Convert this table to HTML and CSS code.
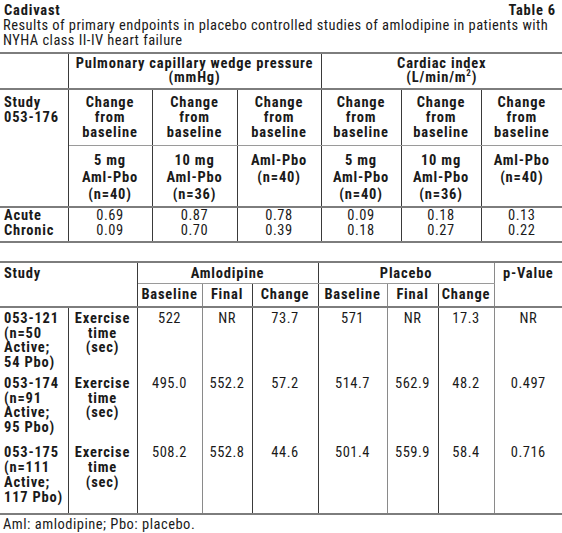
FILE: index.html
```html
<!DOCTYPE html>
<html lang="en">
<head>
  <meta charset="UTF-8">
  <title>Cadivast Table 6</title>
  <link rel="stylesheet" href="styles.css">
</head>
<body>
  <div class="caption">
    <div class="caption-top">
      <span class="brand">Cadivast</span>
      <span class="table-no">Table 6</span>
    </div>
    <div class="subtitle">Results of primary endpoints in placebo controlled studies of amlodipine in patients with NYHA class II-IV heart failure</div>
  </div>

  <table class="grid grid-one">
    <colgroup>
      <col style="width:68px"><col style="width:84px"><col style="width:85px"><col style="width:84px">
      <col style="width:80px"><col style="width:80px"><col style="width:81px">
    </colgroup>
    <tr class="head-row">
      <th class="dark-r"></th>
      <th colspan="3" class="dark-r">Pulmonary capillary wedge pressure<br>(mmHg)</th>
      <th colspan="3">Cardiac index<br>(L/min/m<sup>2</sup>)</th>
    </tr>
    <tr class="change-row">
      <th rowspan="2" class="left dark-r">Study<br>053-176</th>
      <th class="dark-r">Change<br>from<br>baseline</th>
      <th class="dark-r">Change<br>from<br>baseline</th>
      <th class="dark-r">Change<br>from<br>baseline</th>
      <th class="dark-r">Change<br>from<br>baseline</th>
      <th class="dark-r">Change<br>from<br>baseline</th>
      <th>Change<br>from<br>baseline</th>
    </tr>
    <tr class="dose-row">
      <th class="dark-r">5 mg<br>Aml-Pbo<br>(n=40)</th>
      <th class="dark-r">10 mg<br>Aml-Pbo<br>(n=36)</th>
      <th class="dark-r">Aml-Pbo<br>(n=40)</th>
      <th class="dark-r">5 mg<br>Aml-Pbo<br>(n=40)</th>
      <th class="dark-r">10 mg<br>Aml-Pbo<br>(n=36)</th>
      <th>Aml-Pbo<br>(n=40)</th>
    </tr>
    <tr class="value-row first">
      <th class="left dark-r">Acute</th>
      <td class="dark-r">0.69</td><td class="dark-r">0.87</td><td class="dark-r">0.78</td>
      <td class="dark-r">0.09</td><td class="dark-r">0.18</td><td>0.13</td>
    </tr>
    <tr class="value-row last">
      <th class="left dark-r">Chronic</th>
      <td class="dark-r">0.09</td><td class="dark-r">0.70</td><td class="dark-r">0.39</td>
      <td class="dark-r">0.18</td><td class="dark-r">0.27</td><td>0.22</td>
    </tr>
  </table>

  <table class="grid grid-two">
    <colgroup>
      <col style="width:68px"><col style="width:69px"><col style="width:65px"><col style="width:50px">
      <col style="width:66px"><col style="width:69px"><col style="width:51px"><col style="width:56px">
      <col style="width:68px">
    </colgroup>
    <tr class="group-row">
      <th colspan="2" rowspan="2" class="left dark-r">Study</th>
      <th colspan="3" class="dark-r">Amlodipine</th>
      <th colspan="3" class="gray-r">Placebo</th>
      <th rowspan="2">p-Value</th>
    </tr>
    <tr class="sub-row">
      <th class="gray-r">Baseline</th>
      <th class="dark-r">Final</th>
      <th class="dark-r">Change</th>
      <th class="gray-r">Baseline</th>
      <th class="dark-r">Final</th>
      <th class="gray-r">Change</th>
    </tr>
    <tr class="study-row">
      <th class="left dark-r">053-121<br>(n=50<br>Active;<br>54 Pbo)</th>
      <th class="dark-r">Exercise<br>time<br>(sec)</th>
      <td class="gray-r">522</td><td class="dark-r">NR</td><td class="dark-r">73.7</td>
      <td class="gray-r">571</td><td class="dark-r">NR</td><td class="gray-r">17.3</td>
      <td>NR</td>
    </tr>
    <tr class="study-row mid">
      <th class="left dark-r">053-174<br>(n=91<br>Active;<br>95 Pbo)</th>
      <th class="dark-r">Exercise<br>time<br>(sec)</th>
      <td class="gray-r">495.0</td><td class="dark-r">552.2</td><td class="dark-r">57.2</td>
      <td class="gray-r">514.7</td><td class="dark-r">562.9</td><td class="gray-r">48.2</td>
      <td>0.497</td>
    </tr>
    <tr class="study-row end">
      <th class="left dark-r">053-175<br>(n=111<br>Active;<br>117 Pbo)</th>
      <th class="dark-r">Exercise<br>time<br>(sec)</th>
      <td class="gray-r">508.2</td><td class="dark-r">552.8</td><td class="dark-r">44.6</td>
      <td class="gray-r">501.4</td><td class="dark-r">559.9</td><td class="gray-r">58.4</td>
      <td>0.716</td>
    </tr>
  </table>

  <div class="footnote">Aml: amlodipine; Pbo: placebo.</div>
</body>
</html>
```

FILE: styles.css
```css
body {
  margin: 0;
  background: #fff;
  color: #1a1a1a;
  font-family: "Roboto Condensed", "Liberation Sans", sans-serif;
  font-size: 14.5px;
}

.caption {
  padding: 3px 4px 0 3px;
  line-height: 15px;
}

.caption-top {
  display: flex;
  justify-content: space-between;
  padding: 0 2px 0 1px;
}

.brand,
.table-no {
  font-weight: bold;
  letter-spacing: 0.8px;
}

.subtitle {
  letter-spacing: 0.45px;
}

.grid {
  width: 562px;
  table-layout: fixed;
  border-collapse: collapse;
  margin-top: 4px;
}

.grid-two {
  margin-top: 18px;
}

.grid th,
.grid td {
  padding: 0 2px;
  text-align: center;
  vertical-align: top;
}

.grid th {
  font-weight: bold;
  letter-spacing: 0.8px;
}

.grid td {
  font-weight: normal;
  letter-spacing: 0.5px;
}

.grid .left {
  text-align: left;
  padding-left: 4px;
}

.dark-r {
  border-right: 1px solid #3a3a3a;
}

.gray-r {
  border-right: 1px solid #8a8a8a;
}

sup {
  font-size: 9px;
  line-height: 0;
}

/* first table */
.head-row th {
  border-top: 2px solid #7d7d7d;
  border-bottom: 2px solid #7d7d7d;
  line-height: 14px;
  padding-top: 3px;
  padding-bottom: 3px;
}

.change-row th {
  line-height: 15px;
  padding-top: 5px;
  padding-bottom: 5px;
  border-bottom: 1px solid #9a9a9a;
}

.dose-row th {
  line-height: 17px;
  padding-top: 6px;
  padding-bottom: 3px;
  border-bottom: 2px solid #7d7d7d;
}

.change-row th[rowspan] {
  border-bottom: 2px solid #7d7d7d;
}

.value-row th,
.value-row td {
  line-height: 14.5px;
}

.value-row.first th,
.value-row.first td {
  padding-top: 1px;
}

.value-row.last th,
.value-row.last td {
  padding-bottom: 3px;
  border-bottom: 2px solid #7d7d7d;
}

/* second table */
.group-row th {
  border-top: 2px solid #7d7d7d;
  line-height: 15px;
  padding-top: 3px;
  padding-bottom: 2px;
}

.group-row th[rowspan] {
  border-bottom: 2px solid #7d7d7d;
}

.group-row th[colspan="3"] {
  border-bottom: 1px solid #9a9a9a;
}

.sub-row th {
  line-height: 15px;
  padding-top: 3px;
  padding-bottom: 4px;
  border-bottom: 2px solid #7d7d7d;
}

.study-row th,
.study-row td {
  line-height: 14.5px;
  padding-top: 4px;
  padding-bottom: 3px;
}

.study-row.mid th,
.study-row.mid td {
  padding-bottom: 6px;
}

.study-row.end th,
.study-row.end td {
  line-height: 15px;
  padding-bottom: 8px;
  border-bottom: 2px solid #7d7d7d;
}

.footnote {
  padding: 2px 3px 0;
  line-height: 15px;
  letter-spacing: 0.5px;
}
```
